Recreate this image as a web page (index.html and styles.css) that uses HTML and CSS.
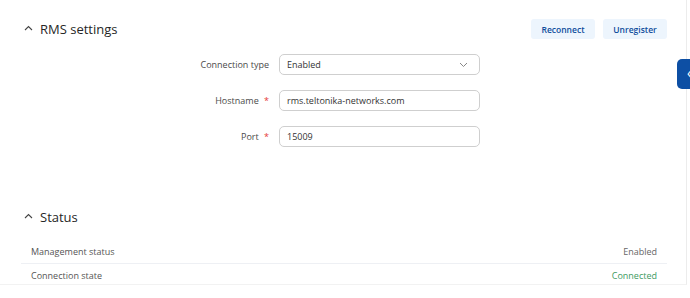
FILE: index.html
```html
<!DOCTYPE html>
<html lang="en">
<head>
    <meta charset="UTF-8">
    <meta name="viewport" content="width=device-width, initial-scale=1.0">
    <title>RMS</title>
    <link rel="stylesheet" href="styles.css">
</head>
<body>
    <div class="main">
        <section class="section">
            <div class="section-head">
                <div class="section-title">
                    <svg class="caret" width="9" height="6" viewBox="0 0 9 6"><path d="M1 5 L4.5 1.5 L8 5" fill="none" stroke="#444" stroke-width="1.1"/></svg>
                    <span>RMS settings</span>
                </div>
                <div class="actions">
                    <button class="soft-btn">Reconnect</button>
                    <button class="soft-btn">Unregister</button>
                </div>
            </div>
            <div class="form">
                <div class="form-row">
                    <label class="form-label">Connection type</label>
                    <div class="field select">
                        <span>Enabled</span>
                        <svg width="9" height="6" viewBox="0 0 9 6"><path d="M1 1 L4.5 4.5 L8 1" fill="none" stroke="#888" stroke-width="1"/></svg>
                    </div>
                </div>
                <div class="form-row">
                    <label class="form-label">Hostname <span class="req">*</span></label>
                    <div class="field">rms.teltonika-networks.com</div>
                </div>
                <div class="form-row">
                    <label class="form-label">Port <span class="req">*</span></label>
                    <div class="field">15009</div>
                </div>
            </div>
        </section>

        <section class="section status">
            <div class="section-head">
                <div class="section-title">
                    <svg class="caret" width="9" height="6" viewBox="0 0 9 6"><path d="M1 5 L4.5 1.5 L8 5" fill="none" stroke="#444" stroke-width="1.1"/></svg>
                    <span>Status</span>
                </div>
            </div>
            <div class="status-table">
                <div class="status-row">
                    <span>Management status</span>
                    <span class="val">Enabled</span>
                </div>
                <div class="status-row">
                    <span>Connection state</span>
                    <span class="val ok">Connected</span>
                </div>
            </div>
        </section>
    </div>
    <div class="side-tab"><span>&lsaquo;</span></div>
</body>
</html>
```

FILE: styles.css
```css
* {
    box-sizing: border-box;
    margin: 0;
    padding: 0;
}
body {
    width: 690px;
    height: 298px;
    overflow: hidden;
    background: #ffffff;
    font-family: 'Open Sans', sans-serif;
    color: #333333;
    position: relative;
}
.main {
    width: 687px;
    height: 285px;
    border-right: 1px solid #ececec;
    border-bottom: 1px solid #f2f2f2;
    padding: 19px 19px 0 21px;
}
.section-head {
    display: flex;
    align-items: center;
    justify-content: space-between;
    height: 20px;
}
.section-title {
    display: flex;
    align-items: center;
    gap: 7px;
    font-size: 13px;
    font-weight: 500;
    color: #262626;
    padding-left: 3px;
}
.caret {
    margin-top: -2px;
}
.actions {
    display: flex;
    gap: 8px;
}
.soft-btn {
    height: 20px;
    width: 64px;
    border: none;
    border-radius: 3px;
    background: #edf5fd;
    color: #0f4d9c;
    font-family: 'Open Sans', sans-serif;
    font-size: 8.5px;
    font-weight: 600;
}
.form {
    margin-top: 15px;
    display: flex;
    flex-direction: column;
    gap: 15px;
}
.form-row {
    display: flex;
    align-items: center;
    gap: 10px;
}
.form-label {
    width: 248px;
    text-align: right;
    font-size: 9px;
    color: #4a4a4a;
}
.req {
    color: #e53935;
    margin-left: 3px;
}
.field {
    width: 201px;
    height: 21px;
    border: 1px solid #cfcfcf;
    border-radius: 5px;
    padding: 0 7px;
    display: flex;
    align-items: center;
    font-size: 9px;
    color: #333;
}
.select {
    justify-content: space-between;
    padding-right: 11px;
}
.status {
    margin-top: 60px;
}
.status-table {
    margin-top: 13px;
}
.status-row {
    display: flex;
    justify-content: space-between;
    height: 23px;
    align-items: center;
    padding: 0 10px;
    font-size: 9px;
    color: #555;
}
.status-row + .status-row {
    border-top: 1px solid #eef0f4;
}
.val {
    color: #666;
}
.ok {
    color: #3d9a5f;
}
.side-tab {
    position: absolute;
    right: 0;
    top: 59px;
    width: 13px;
    height: 30px;
    background: #0d4fa4;
    border-radius: 5px 0 0 5px;
    color: #fff;
    font-size: 14px;
    line-height: 28px;
    padding-left: 10px;
    overflow: hidden;
}
```
